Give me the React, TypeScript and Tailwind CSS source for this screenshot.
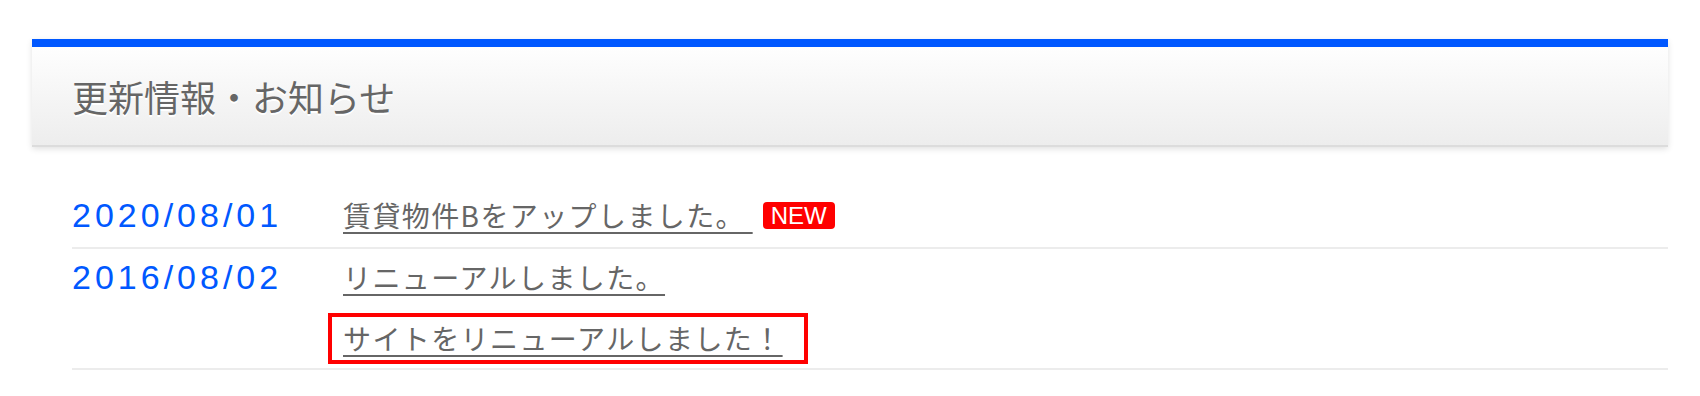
const news = [
  { date: "2020/08/01", items: ["賃貸物件Bをアップしました。 "], isNew: true },
  { date: "2016/08/02", items: ["リニューアルしました。"], isNew: false },
]

const jp = "font-['Noto_Sans_CJK_JP','Noto_Sans',sans-serif]"

const App = () => {
  return (
    <div className="min-h-screen bg-white px-[32px] pt-[39px]">
      <section>
        <div className="flex h-[108px] items-center border-t-8 border-b-2 border-t-[#0058ff] border-b-[#dcdcdc] bg-linear-to-b from-[#fefefe] to-[#ededed] pl-[40px] shadow-[0_2px_6px_rgba(0,0,0,0.12)]">
          <h2 className={`${jp} text-[36px] leading-none text-[#666] [text-shadow:0_2px_0_#fff]`}>
            更新情報・お知らせ
          </h2>
        </div>

        <ul className="ml-[40px] mt-[40px]">
          <li className="flex border-b-2 border-[#ececec] pb-[4px]">
            <div className="w-[271px] shrink-0 font-['Liberation_Sans',sans-serif] text-[34px] leading-[56px] tracking-[4px] text-[#0058ff]">
              {news[0].date}
            </div>
            <div className="flex items-center">
              <a href="#" className={`${jp} whitespace-pre text-[28px] leading-[56px] tracking-[1.4px] text-[#666] underline decoration-2 underline-offset-[5px]`}>
                {news[0].items[0]}
              </a>
              <span className="ml-[10px] h-[27px] rounded-[4px] bg-[#ff0000] px-[8px] font-['Liberation_Sans',sans-serif] text-[24px] leading-[27px] text-white">
                NEW
              </span>
            </div>
          </li>
          <li className="flex border-b-2 border-[#ececec] pb-[4px]">
            <div className="w-[271px] shrink-0 font-['Liberation_Sans',sans-serif] text-[34px] leading-[56px] tracking-[4px] text-[#0058ff]">
              {news[1].date}
            </div>
            <div className="flex flex-col items-start">
              <a href="#" className={`${jp} text-[28px] leading-[56px] tracking-[1.4px] text-[#666] underline decoration-2 underline-offset-[5px]`}>
                {news[1].items[0]}
              </a>
              <div className="ml-[-15px] mt-[8px] h-[51px] w-[480px] border-4 border-[#ff0000] pl-[11px]">
                <a href="#" className={`${jp} text-[28px] leading-[43px] tracking-[1.4px] text-[#666] underline decoration-2 underline-offset-[5px]`}>
                  サイトをリニューアルしました！
                </a>
              </div>
            </div>
          </li>
        </ul>
      </section>
    </div>
  )
}

export default App
